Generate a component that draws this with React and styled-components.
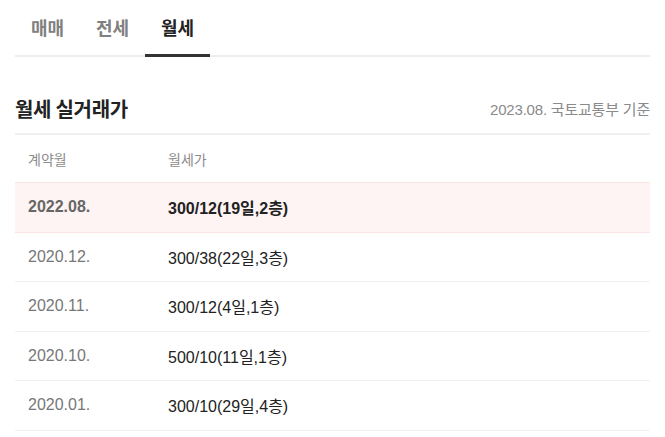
import React from "react";
import styled, { createGlobalStyle } from "styled-components";

const Global = createGlobalStyle`
  html, body { margin: 0; padding: 0; background: #fff; }
  body { font-family: "Liberation Sans", "Noto Sans CJK KR", sans-serif; }
`;

const Page = styled.div`
  padding: 0 15px;
`;

const Tabs = styled.div`
  display: flex;
  height: 55px;
  border-bottom: 2px solid #eeeeee;
`;

const Tab = styled.div`
  width: 65px;
  display: flex;
  align-items: center;
  justify-content: center;
  font-family: "Noto Sans CJK KR", sans-serif;
  font-size: 18px;
  font-weight: 700;
  color: ${(p) => (p.$active ? "#222" : "#808080")};
  position: relative;
  padding-bottom: 2px;
  box-sizing: border-box;
  &::after {
    content: "";
    display: ${(p) => (p.$active ? "block" : "none")};
    position: absolute;
    left: 0;
    right: 0;
    bottom: -2px;
    height: 3px;
    background: #333;
  }
`;

const TitleRow = styled.div`
  margin-top: 26px;
  height: 50px;
  display: flex;
  align-items: center;
  justify-content: space-between;
  border-bottom: 2px solid #f0f0f0;
`;

const Title = styled.h2`
  margin: 0;
  font-family: "Noto Sans CJK KR", sans-serif;
  font-size: 20px;
  font-weight: 700;
  color: #222;
  letter-spacing: -0.3px;
`;

const Source = styled.span`
  font-size: 15px;
  color: #8a8a8a;
  letter-spacing: -0.2px;
`;

const Row = styled.div`
  display: grid;
  grid-template-columns: 140px 1fr;
  align-items: center;
  padding: 0 13px;
  height: ${(p) => (p.$head ? "47px" : "48.5px")};
  font-size: ${(p) => (p.$head ? "14px" : "16px")};
  background: ${(p) => (p.$hl ? "#fff4f4" : "#fff")};
  border-top: ${(p) => (p.$hl ? "1px solid #fbe4e4" : "none")};
  border-bottom: ${(p) =>
    p.$head ? "none" : p.$hl ? "1px solid #fbe4e4" : "1px solid #f0f0f0"};
  font-weight: ${(p) => (p.$hl ? 700 : 400)};
`;

const DateCell = styled.div`
  color: ${(p) => (p.$head ? "#8c8c8c" : p.$hl ? "#666" : "#777")};
`;

const PriceCell = styled.div`
  color: ${(p) => (p.$head ? "#8c8c8c" : "#222")};
`;

const rows = [
  { d: "2022.08.", p: "300/12(19일,2층)", hl: true },
  { d: "2020.12.", p: "300/38(22일,3층)" },
  { d: "2020.11.", p: "300/12(4일,1층)" },
  { d: "2020.10.", p: "500/10(11일,1층)" },
  { d: "2020.01.", p: "300/10(29일,4층)" },
];

export default function App() {
  return (
    <Page>
      <Global />
      <Tabs>
        <Tab>매매</Tab>
        <Tab>전세</Tab>
        <Tab $active>월세</Tab>
      </Tabs>
      <TitleRow>
        <Title>월세 실거래가</Title>
        <Source>2023.08. 국토교통부 기준</Source>
      </TitleRow>
      <Row $head>
        <DateCell $head>계약월</DateCell>
        <PriceCell $head>월세가</PriceCell>
      </Row>
      {rows.map((r) => (
        <Row key={r.d} $hl={r.hl}>
          <DateCell $hl={r.hl}>{r.d}</DateCell>
          <PriceCell $hl={r.hl}>{r.p}</PriceCell>
        </Row>
      ))}
    </Page>
  );
}
